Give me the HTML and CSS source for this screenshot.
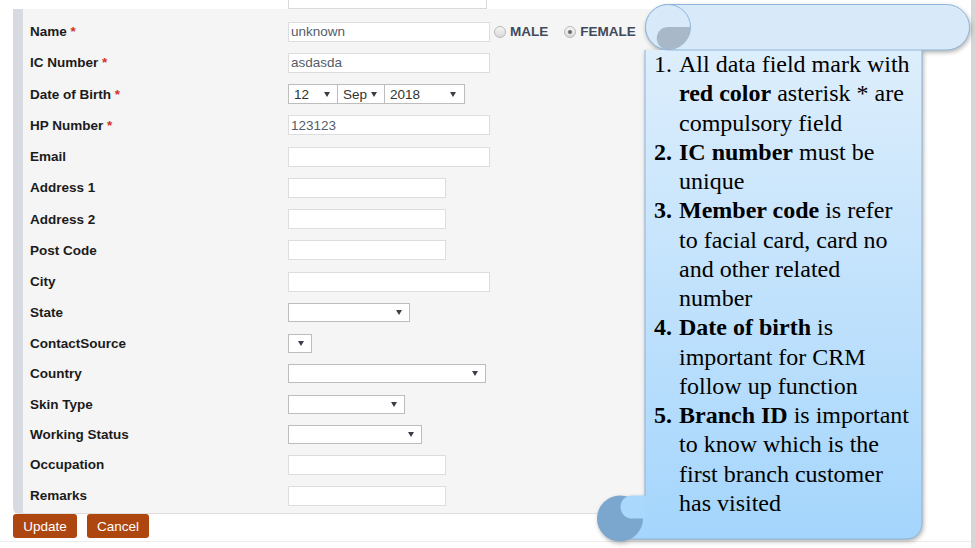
FILE: index.html
```html
<!DOCTYPE html>
<html>
<head>
  <meta charset="utf-8">
  <title>Edit Member</title>
  <link rel="stylesheet" href="styles.css">
</head>
<body>
  <div class="page">
    <div class="main">
      <div class="top-cut"><span></span></div>

      <form class="panel">
        <div class="row">
          <label>Name <em>*</em></label>
          <div class="field">
            <input class="in w-lg" type="text" value="unknown">
            <span class="radio"><span class="dot"></span>MALE</span>
            <span class="radio"><span class="dot on"></span>FEMALE</span>
          </div>
        </div>
        <div class="row">
          <label>IC Number <em>*</em></label>
          <div class="field"><input class="in w-lg" type="text" value="asdasda"></div>
        </div>
        <div class="row">
          <label>Date of Birth <em>*</em></label>
          <div class="field dob">
            <div class="select s-day"><span>12</span><i class="caret"></i></div>
            <div class="select s-mon"><span>Sep</span><i class="caret"></i></div>
            <div class="select s-year"><span>2018</span><i class="caret"></i></div>
          </div>
        </div>
        <div class="row">
          <label>HP Number <em>*</em></label>
          <div class="field"><input class="in w-lg" type="text" value="123123"></div>
        </div>
        <div class="row">
          <label>Email</label>
          <div class="field"><input class="in w-lg" type="text"></div>
        </div>
        <div class="row">
          <label>Address 1</label>
          <div class="field"><input class="in w-md" type="text"></div>
        </div>
        <div class="row">
          <label>Address 2</label>
          <div class="field"><input class="in w-md" type="text"></div>
        </div>
        <div class="row">
          <label>Post Code</label>
          <div class="field"><input class="in w-md" type="text"></div>
        </div>
        <div class="row">
          <label>City</label>
          <div class="field"><input class="in w-lg" type="text"></div>
        </div>
        <div class="row">
          <label>State</label>
          <div class="field"><div class="select s-state"><i class="caret"></i></div></div>
        </div>
        <div class="row sel">
          <label>ContactSource</label>
          <div class="field"><div class="select s-source"><i class="caret"></i></div></div>
        </div>
        <div class="row sel">
          <label>Country</label>
          <div class="field"><div class="select s-country"><i class="caret"></i></div></div>
        </div>
        <div class="row sel">
          <label>Skin Type</label>
          <div class="field"><div class="select s-skin"><i class="caret"></i></div></div>
        </div>
        <div class="row sel">
          <label>Working Status</label>
          <div class="field"><div class="select s-work"><i class="caret"></i></div></div>
        </div>
        <div class="row occ">
          <label>Occupation</label>
          <div class="field"><input class="in w-md" type="text"></div>
        </div>
        <div class="row rem">
          <label>Remarks</label>
          <div class="field"><input class="in w-md" type="text"></div>
        </div>
      </form>

      <div class="actions">
        <button type="button" class="btn btn-update">Update</button>
        <button type="button" class="btn btn-cancel">Cancel</button>
      </div>
      <div class="foot-line"></div>
    </div>
    <div class="edge"></div>
  </div>

  <!-- scroll shaped note lying over the form -->
  <div class="callout">
    <svg class="scroll" width="379" height="548" viewBox="597 0 379 548">
      <defs>
        <linearGradient id="bodyFill" gradientUnits="userSpaceOnUse" x1="0" y1="50" x2="0" y2="540">
          <stop offset="0" stop-color="#ddeefc"/>
          <stop offset="1" stop-color="#a4d5fc"/>
        </linearGradient>
      </defs>
      <path d="M645,50 H922 V524 A15,15 0 0 1 907,539 H620 V496 H645 Z" fill="url(#bodyFill)"/>
      <path d="M922,50 V524 A15,15 0 0 1 907,539 H625 M645,496 V50" fill="none" stroke="#8fb5da" stroke-width="1"/>
      <rect x="645.5" y="4.5" width="324" height="45.5" rx="23" fill="#d8eafa" stroke="#8fb5da"/>
      <circle cx="668" cy="27" r="22.5" fill="#d8eafa" stroke="#8fb5da"/>
      <path d="M668,27 H690.5 A22.5,22.5 0 0 1 668,49.5 A11.25,11.25 0 0 1 668,27 Z" fill="#a9b8c8"/>
      <circle cx="620" cy="518.5" r="23" fill="#7ba6cd"/>
      <path d="M645,495.5 H632 A11.5,11.5 0 0 0 632,518.5 H645 Z" fill="#a9d8fc"/>
    </svg>

    <ol class="notes">
      <li><span class="num">1.</span><span>All data field mark with<br><b>red color</b> asterisk * are<br>compulsory field</span></li>
      <li><b class="num">2.</b><span><b>IC number</b> must be<br>unique</span></li>
      <li><b class="num">3.</b><span><b>Member code</b> is refer<br>to facial card, card no<br>and other related<br>number</span></li>
      <li><b class="num">4.</b><span><b>Date of birth</b> is<br>important for CRM<br>follow up function</span></li>
      <li><b class="num">5.</b><span><b>Branch ID</b> is important<br>to know which is the<br>first branch customer<br>has visited</span></li>
    </ol>
  </div>
</body>
</html>
```

FILE: styles.css
```css
body {
  margin: 0;
  font-family: "Liberation Sans", Arial, sans-serif;
  background: #fff;
  position: relative;
  overflow: hidden;
}

.page {
  display: flex;
  height: 548px;
}

.main {
  flex: 1;
}

.edge {
  width: 5px;
  background: #d6d6d6;
}

/* bottom of the field above, cut off by the viewport */
.top-cut {
  height: 9px;
  padding-left: 288px;
}

.top-cut span {
  display: block;
  width: 199px;
  height: 9px;
  box-sizing: border-box;
  border: 1px solid #d9d9d9;
  border-top: none;
  background: #fff;
}

.panel {
  margin: 0 0 0 13px;
  width: 887px;
  border-left: 10px solid #d7dae0;
  border-bottom: 1px solid #dedede;
  border-bottom-left-radius: 6px;
  background: #f5f5f5;
  padding: 7px 0 1.5px 7px;
}

.row {
  display: grid;
  grid-template-columns: 258px auto;
  align-items: center;
  height: 31.25px;
}

.row.sel {
  height: 30.25px;
}

.row.occ {
  height: 30px;
}

.row.rem {
  height: 32px;
}

.row label {
  font-weight: bold;
  font-size: 13.5px;
  color: #1b1b1b;
}

.row label em {
  font-style: normal;
  color: #d2322d;
}

.field {
  display: flex;
  align-items: center;
}

.in {
  box-sizing: border-box;
  height: 20px;
  margin: 0;
  border: 1px solid #dddddd;
  border-radius: 0;
  background: #fff;
  padding: 0 2px;
  font: 13.5px "Liberation Sans", Arial, sans-serif;
  color: #545d69;
  outline: none;
}

.w-lg {
  width: 202px;
}

.w-md {
  width: 158px;
}

.radio {
  display: flex;
  align-items: center;
  gap: 4px;
  margin-left: 4px;
  font-weight: bold;
  font-size: 13.5px;
  color: #3d4b5c;
}

.radio + .radio {
  margin-left: 16px;
}

.dot {
  display: grid;
  place-items: center;
  width: 12px;
  height: 12px;
  box-sizing: border-box;
  border-radius: 50%;
  border: 1px solid #b9b9b9;
  background: linear-gradient(#f6f6f6, #d9d9d9);
}

.dot.on::after {
  content: "";
  width: 4px;
  height: 4px;
  border-radius: 50%;
  background: #6a6a6a;
}

.select {
  box-sizing: border-box;
  height: 19px;
  display: flex;
  align-items: center;
  padding: 0 7px 0 5px;
  border: 1px solid #bdbdbd;
  background: #fff;
  font-size: 13.5px;
  color: #333;
}

.dob .select {
  height: 20px;
}

.caret {
  margin-left: auto;
  width: 0;
  height: 0;
  border-left: 3px solid transparent;
  border-right: 3px solid transparent;
  border-top: 5px solid #3a3f47;
}

.s-day {
  width: 50px;
}

.s-mon {
  width: 48px;
  margin-left: -1px;
}

.s-year {
  width: 81px;
  margin-left: -1px;
  padding-right: 8px;
}

.s-state {
  width: 122px;
}

.s-source {
  width: 24px;
}

.s-country {
  width: 198px;
}

.s-skin {
  width: 117px;
}

.s-work {
  width: 134px;
}

.actions {
  display: flex;
  gap: 10px;
  padding-left: 13px;
}

.btn {
  height: 24px;
  padding: 0;
  border: none;
  border-radius: 3px;
  background: #ad470f;
  color: #fff;
  font: 13.5px "Liberation Sans", Arial, sans-serif;
  cursor: pointer;
}

.btn-update {
  width: 64px;
}

.btn-cancel {
  width: 62px;
}

.foot-line {
  margin-top: 3px;
  border-top: 1px solid #ececec;
}

.callout {
  position: absolute;
  left: 597px;
  top: 0;
  width: 379px;
  height: 548px;
}

.scroll {
  position: absolute;
  left: 0;
  top: 0;
  filter: drop-shadow(1px 2px 2px rgba(0, 0, 0, 0.3));
}

.notes {
  position: absolute;
  left: 57px;
  top: 50px;
  margin: 0;
  padding: 0;
  list-style: none;
  font: 24px/29.27px "Liberation Serif", "Times New Roman", serif;
  color: #000;
  white-space: nowrap;
}

.notes li {
  display: flex;
}

.notes .num {
  flex: none;
  width: 25px;
}
```
